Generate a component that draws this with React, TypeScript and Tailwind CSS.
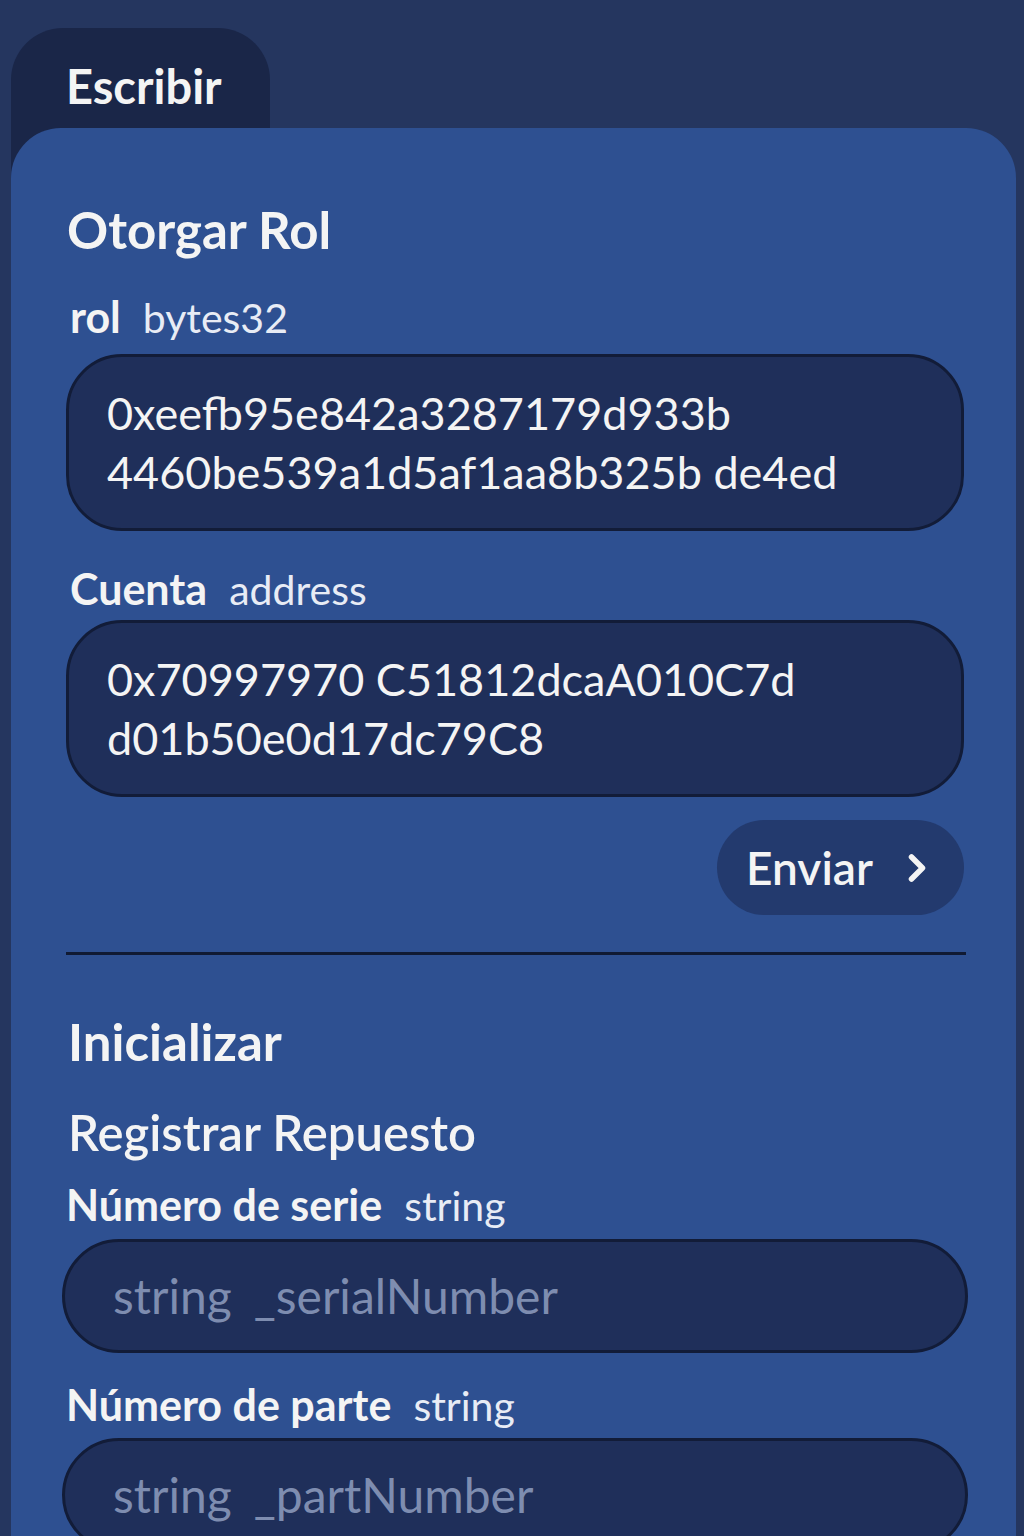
import type { FC } from "react";
import { ChevronRight } from "lucide-react";

interface fieldProps {
  label: string;
  type: string;
  className?: string;
}

let Label: FC<fieldProps> = ({ label, type, className }) => {
  return (
    <div className={"flex items-baseline gap-[22px] leading-[48px] " + (className ?? "")}>
      <span className="text-[43px] font-bold">{label}</span>
      <span className="text-[41px] font-normal text-[#e8ecf5]">{type}</span>
    </div>
  );
};

let App: FC = () => {
  return (
    <div
      className="min-h-screen w-[1024px] bg-[#25365f] pt-[28px] pl-[11px] pr-[8px] text-[#f4f4f4] overflow-hidden"
      style={{ fontFamily: "Lato, 'Noto Sans', sans-serif" }}
    >
      <div className="w-[259px] h-[100px] rounded-t-[52px] bg-[#1a2648] pl-[55px] pt-[30px] text-[47px] font-bold leading-[56px]">
        Escribir
      </div>
      <div className="bg-[linear-gradient(to_right,#1a2648_259px,transparent_259px)]">
        <div className="rounded-t-[50px] bg-[#2e5091] pl-[55px] pr-[52px] pt-[74px] pb-[40px] min-h-[1420px]">
          <h2 className="text-[51px] font-bold leading-[56px] ml-[1px]">Otorgar Rol</h2>

          <Label label="rol" type="bytes32" className="mt-[35px] ml-[4px]" />
          <div className="mt-[12px] h-[177px] rounded-[56px] border-[3px] border-[#121c38] bg-[#1f2f5a] px-[38px] pt-[27px] text-[45px] leading-[59px]">
            0xeefb95e842a3287179d933b
            <br />
            4460be539a1d5af1aa8b325b de4ed
          </div>

          <Label label="Cuenta" type="address" className="mt-[34px] ml-[4px]" />
          <div className="mt-[6px] h-[177px] rounded-[56px] border-[3px] border-[#121c38] bg-[#1f2f5a] px-[38px] pt-[27px] text-[45px] leading-[59px]">
            0x70997970 C51812dcaA010C7d
            <br />
            d01b50e0d17dc79C8
          </div>

          <div className="mt-[23px] flex justify-end">
            <button className="h-[95px] w-[247px] rounded-full bg-[#233a6e] flex items-center justify-center gap-[22px] pl-[4px] text-[46px] font-semibold">
              <span>Enviar</span>
              <ChevronRight size={44} strokeWidth={3} />
            </button>
          </div>

          <div className="mt-[37px] -mr-[2px] h-[3px] bg-[#101a33]" />

          <h2 className="mt-[59px] text-[51px] font-bold leading-[56px] ml-[2px]">Inicializar</h2>
          <h3 className="mt-[34px] text-[49px] font-semibold leading-[56px] ml-[2px]">Registrar Repuesto</h3>

          <Label label="Número de serie" type="string" className="mt-[21px]" />
          <div className="mt-[9px] -mx-[4px] h-[114px] rounded-full border-[3px] border-[#121c38] bg-[#1f2f5a] pl-[48px] flex items-center gap-[22px] text-[48px] text-[#7e8db0]">
            <span>string</span>
            <span>_serialNumber</span>
          </div>

          <Label label="Número de parte" type="string" className="mt-[28px]" />
          <div className="mt-[8px] -mx-[4px] h-[114px] rounded-full border-[3px] border-[#121c38] bg-[#1f2f5a] pl-[48px] flex items-center gap-[22px] text-[48px] text-[#7e8db0]">
            <span>string</span>
            <span>_partNumber</span>
          </div>
        </div>
      </div>
    </div>
  );
};

export default App;
